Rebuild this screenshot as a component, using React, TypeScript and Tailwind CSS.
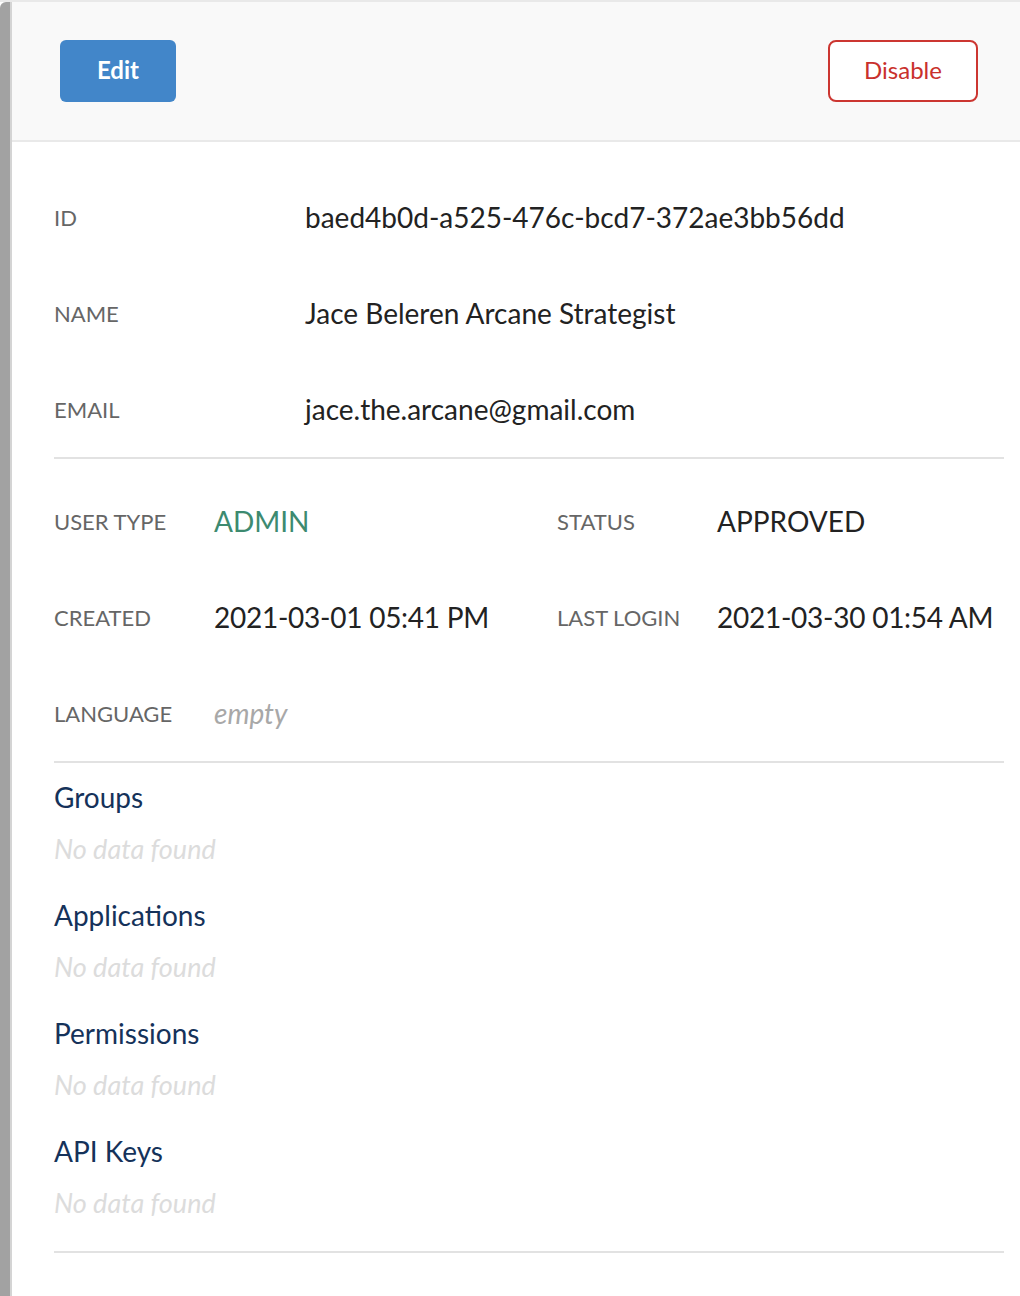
const font = { fontFamily: "Lato, 'Open Sans', sans-serif" };

function Row({ label, value, valueClass = "text-[#222]" }: { label: string; value: string; valueClass?: string }) {
  return (
    <div className="flex h-[96px] items-center">
      <div className="w-[251px] text-[22px] uppercase text-[#666]">{label}</div>
      <div className={`text-[28px] ${valueClass}`}>{value}</div>
    </div>
  );
}

function Cell({ label, value, valueClass = "text-[#222]", labelW }: { label: string; value: string; valueClass?: string; labelW: string }) {
  return (
    <div className="flex h-[96px] items-center">
      <div className={`${labelW} text-[22px] uppercase text-[#666]`}>{label}</div>
      <div className={`text-[28px] ${valueClass}`}>{value}</div>
    </div>
  );
}

function Block({ title }: { title: string }) {
  return (
    <div className="mb-[30px]">
      <div className="h-[36px] text-[28px] leading-[36px] text-[#15325a]">{title}</div>
      <div className="mt-[16px] h-[36px] text-[27px] italic leading-[36px] text-[#dcdcdc]">No data found</div>
    </div>
  );
}

export default function App() {
  return (
    <div className="flex min-h-[1296px] w-[1020px] bg-white" style={font}>
      <div className="flex w-[12px] shrink-0 flex-col">
        <div className="h-[2px] bg-[#e9e9e9]" />
        <div className="flex flex-1">
          <div className="w-[10px] rounded-tl-[6px] bg-[#a2a2a2]" />
          <div className="w-[2px] bg-[#d4d4d4]" />
        </div>
      </div>
      <div className="flex-1">
        <div className="flex h-[142px] items-center justify-between border-t-2 border-b-2 border-[#e9e9e9] bg-[#f9f9f9] pl-[48px] pr-[42px]">
          <button className="h-[62px] w-[116px] rounded-[6px] bg-[#4286c9] pb-[3px] text-[24px] font-bold text-white">Edit</button>
          <button className="h-[62px] w-[150px] rounded-[8px] border-2 border-[#cc3631] bg-white pb-[2px] text-[24px] text-[#c9302c]">Disable</button>
        </div>
        <div className="pl-[42px] pr-[16px]">
          <div className="border-b-2 border-[#e2e2e2] pt-[27px]">
            <Row label="ID" value="baed4b0d-a525-476c-bcd7-372ae3bb56dd" />
            <Row label="Name" value="Jace Beleren Arcane Strategist" />
            <Row label="Email" value="jace.the.arcane@gmail.com" />
          </div>
          <div className="grid grid-cols-[503px_1fr] border-b-2 border-[#e2e2e2] pt-[14px]">
            <Cell labelW="w-[160px]" label="User Type" value="ADMIN" valueClass="text-[#3d8a70]" />
            <Cell labelW="w-[160px]" label="Status" value="APPROVED" />
            <Cell labelW="w-[160px]" label="Created" value="2021-03-01 05:41 PM" valueClass="tracking-[-0.25px] text-[#222]" />
            <Cell labelW="w-[160px]" label="Last Login" value="2021-03-30 01:54 AM" valueClass="tracking-[-0.25px] text-[#222]" />
            <Cell labelW="w-[160px]" label="Language" value="empty" valueClass="italic text-[#a8a8a8]" />
          </div>
          <div className="border-b-2 border-[#e2e2e2] pt-[16px]">
            <Block title="Groups" />
            <Block title="Applications" />
            <Block title="Permissions" />
            <Block title="API Keys" />
          </div>
        </div>
      </div>
    </div>
  );
}
